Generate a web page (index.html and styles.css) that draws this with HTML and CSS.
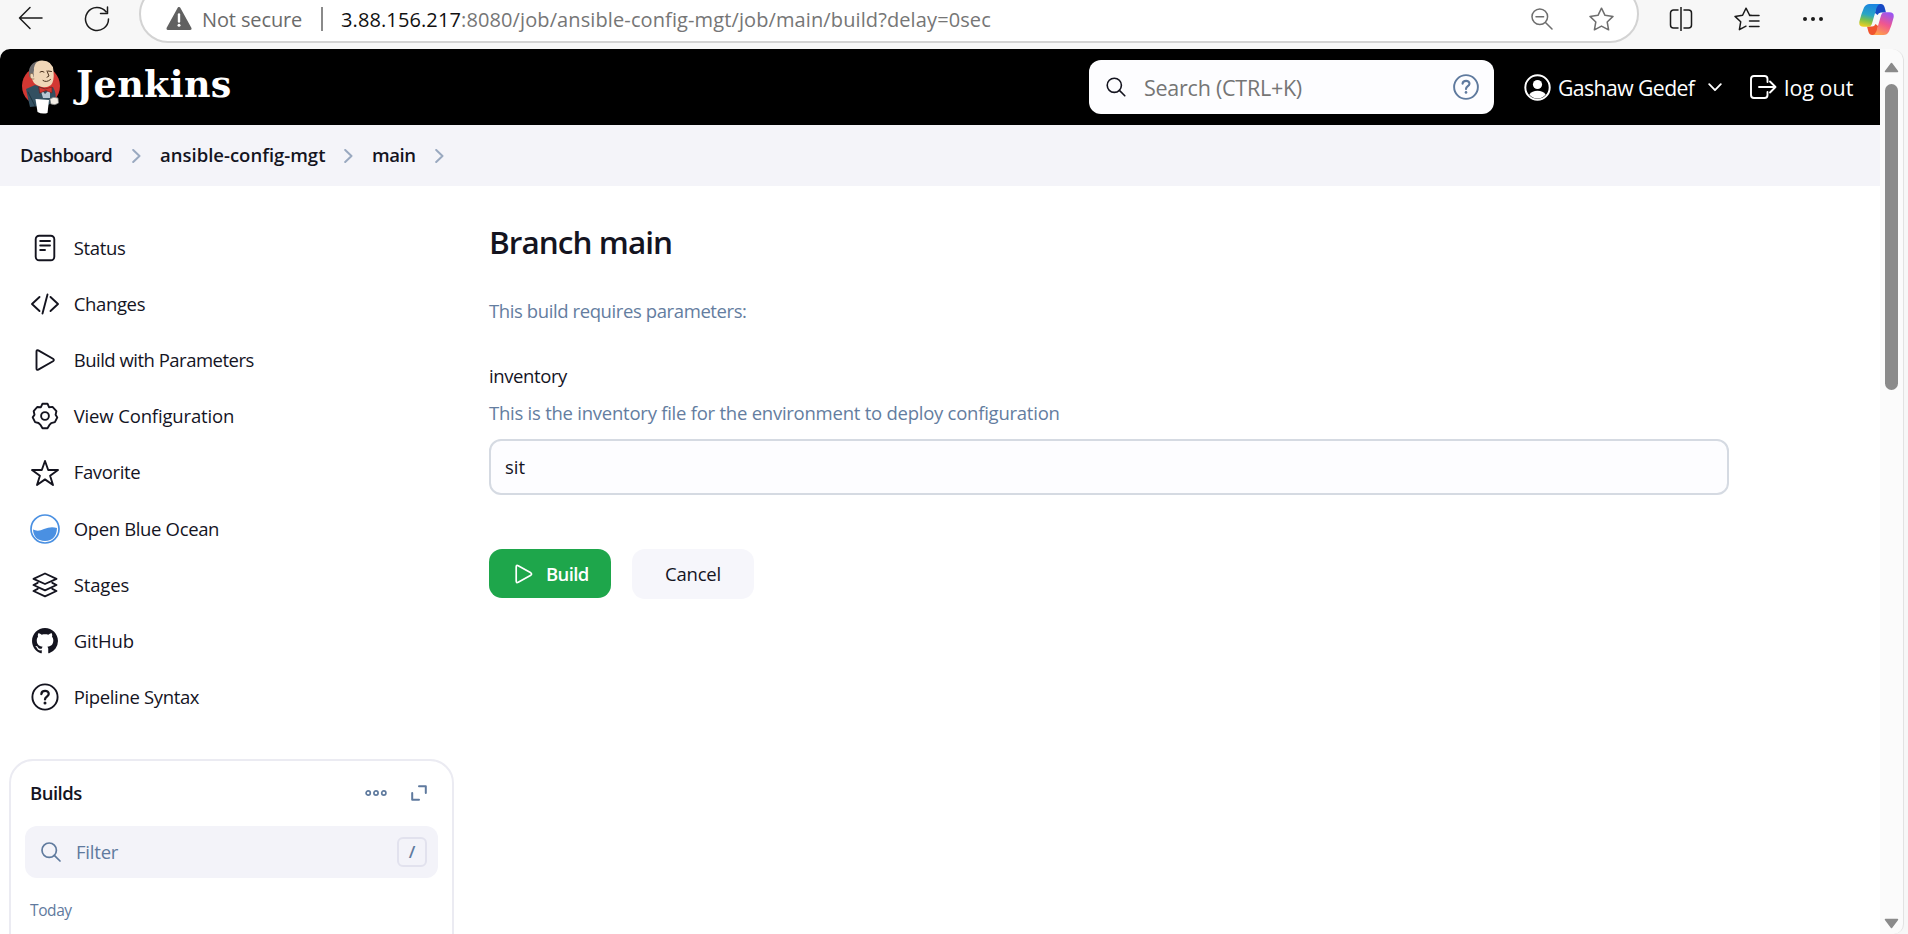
FILE: index.html
```
<!DOCTYPE html>
<html lang="en">
<head>
<meta charset="utf-8">
<title>Branch main - Jenkins</title>
<link rel="stylesheet" href="styles.css">
</head>
<body>
<div class="browser-bar">
  <svg class="back" width="26" height="24" viewBox="0 0 26 24"><path d="M24 12H1.5M12 1.5L1.5 12L12 22.5"/></svg>
  <svg class="reload" width="26" height="26" viewBox="0 0 26 26"><path d="M24.500 13A11.500 11.500 0 1 1 22 5.800M23.500 1V7.500H16.500"/></svg>
  <div class="address">
    <svg class="warn" width="26" height="24" viewBox="0 0 26 24"><path d="M13 1.500L24 21.500H2Z" fill="#616161" stroke="#616161" stroke-width="3" stroke-linejoin="round"/><path d="M13 7.500V14.500" stroke="#fff" stroke-width="2.400"/><circle cx="13" cy="18.300" r="1.500" fill="#fff" stroke="none"/></svg>
    <span class="t insecure">Not secure</span>
    <span class="divider"></span>
    <span class="t url"><span class="host">3.88.156.217</span>:8080/job/ansible-config-mgt/job/main/build?delay=0sec</span>
    <svg class="zoom-out" width="22" height="22" viewBox="0 0 22 22"><circle cx="8.800" cy="8.800" r="7.800"/><path d="M14.500 14.500L21 21M5 8.800H12.600"/></svg>
    <svg class="fav" width="25" height="24" viewBox="0 0 25 24"><path d="M12.500 1.200L16 8.300L24 9.400L18.200 15L19.600 22.800L12.500 19.100L5.400 22.800L6.800 15L1 9.400L9 8.300Z"/></svg>
  </div>
  <svg class="split" width="24" height="24" viewBox="0 0 24 24"><path d="M9 3H4.500A3 3 0 0 0 1.500 6V18A3 3 0 0 0 4.500 21H9M15 3H19.500A3 3 0 0 1 22.500 6V18A3 3 0 0 1 19.500 21H15M12 0V24"/></svg>
  <svg class="favs" width="26" height="24" viewBox="0 0 26 24"><path d="M18 8.500L15.500 8L12 1.200L8.600 8.300L1 9.400L6.700 14.800L5.400 22.700L12 19.200M15.500 8.500H25M15.500 14H25M15.500 19.500H25"/></svg>
  <svg class="dots" width="22" height="6" viewBox="0 0 22 6"><circle cx="3" cy="3" r="2"/><circle cx="11" cy="3" r="2"/><circle cx="19" cy="3" r="2"/></svg>
  <svg class="copilot" width="35" height="31" viewBox="0 0 35 31">
    <defs>
      <linearGradient id="cpA" x1="0.400" y1="0" x2="0.200" y2="1"><stop offset="0" stop-color="#1b86e0"/><stop offset=".45" stop-color="#2aa6c4"/><stop offset=".7" stop-color="#7cc14a"/><stop offset="1" stop-color="#f4d01f"/></linearGradient>
      <linearGradient id="cpB" x1="0.700" y1="0" x2="0.300" y2="1"><stop offset="0" stop-color="#9a55f2"/><stop offset=".5" stop-color="#f0568f"/><stop offset="1" stop-color="#ffa04a"/></linearGradient>
    </defs>
    <path d="M17 0H22Q24.500 0 25.500 3L27 8.500H22Q19.500 8.500 18.500 11L16 9Z" fill="#1749c4"/>
    <path d="M18 31H13Q10.500 31 9.500 28L8 22.500H13Q15.500 22.500 16.500 20L19 22Z" fill="#f0542e"/>
    <path d="M10.500 0H21Q18.500 1 17.500 4L13 19.500Q12 22.700 9 22.700H4.500Q-.5 22.700 .4 17.500Q2.500 9 5 3.500Q6.800 0 10.500 0Z" fill="url(#cpA)"/>
    <path d="M24.500 31H14Q16.500 30 17.500 27L22 11.500Q23 8.300 26 8.300H30.500Q35.500 8.300 34.600 13.500Q32.500 22 30 27.500Q28.200 31 24.500 31Z" fill="url(#cpB)"/>
  </svg>
</div>

<div class="window">
  <div class="page">
    <header class="top">
      <svg class="butler" width="40" height="56" viewBox="0 0 40 56">
        <ellipse cx="20" cy="27" rx="19" ry="19.500" fill="#d33833"/>
        <path d="M5 30L14 26L25 30L32 28Q36 35 34 42L27 46L9 48Q7 40 5 30Z" fill="#335061"/>
        <path d="M10 14Q11 2 21 1.500Q32 2 32.500 12Q33.500 22 30 26Q25 30 18 27Q11 24 11 19Z" fill="#f0d6b7"/>
        <path d="M8.500 18Q5.500 6 17 1.800Q12.500 6 13 11Q12 14 13 18L11 19Z" fill="#6d6b6d"/>
        <path d="M12 15Q9 13 9 17Q10 21 13 20" fill="#f0d6b7" stroke="#81603f" stroke-width=".7"/>
        <path d="M19 13Q21 11.500 23 13M27 12L30.500 12.500M26 12L28 17L26 18.200M22 21.500Q25.500 24 29.500 20.500" fill="none" stroke="#49301c" stroke-width="1"/>
        <path d="M19 29L24 35L29 30V39L22 39Z" fill="#b8c8d6"/>
        <path d="M18 28L24 30L31 28L31 34L25 31.500L19 34Z" fill="#d33833" stroke="#7a1512" stroke-width=".6"/>
        <path d="M14.500 40L28 41L26.500 54Q21 55.500 16.500 53Z" fill="#fff"/>
        <path d="M29 40Q32 37 37 39L37.500 44Q34 47 30 45Z" fill="#f3eee6" stroke="#777" stroke-width=".7"/>
        <path d="M7 33L12 43L14 47" fill="none" stroke="#1d3440" stroke-width="1"/>
      </svg>
      <span class="t wordmark">Jenkins</span>
      <div class="search">
        <svg class="magnifier" width="20" height="20" viewBox="0 0 20 20"><circle cx="8.300" cy="8.300" r="7.100"/><path d="M13.400 13.400L18.800 18.800"/></svg>
        <span class="t search-text">Search (CTRL+K)</span>
        <svg class="help" width="26" height="26" viewBox="0 0 512 512"><path d="M256 22a234 234 0 1 0 0 468 234 234 0 0 0 0-468z" stroke-width="38"/><path d="M188 190c8-75 138-72 136 2 0 50-68 48-68 105" stroke-width="42"/><circle class="solid" cx="256" cy="362" r="26"/></svg>
      </div>
      <div class="user">
        <svg width="27" height="27" viewBox="0 0 27 27"><circle cx="13.500" cy="13.500" r="12.200" fill="none" stroke="#fff" stroke-width="2"/><circle cx="13.500" cy="10.500" r="4.600" fill="#fff"/><path d="M5.300 20.500Q8 16.800 13.500 16.800T21.700 20.500Q18.500 24.500 13.500 24.500T5.300 20.500Z" fill="#fff"/></svg>
        <span class="t username">Gashaw Gedef</span>
        <svg class="chev" width="14" height="9" viewBox="0 0 14 9"><path d="M1.200 1.200L7 7.200L12.800 1.200"/></svg>
      </div>
      <div class="logout">
        <svg width="27" height="24" viewBox="0 0 27 24"><path d="M17.500 7V4Q17.500 1 14.500 1H4Q1 1 1 4V20Q1 23 4 23H14.500Q17.500 23 17.500 20V17M9 12H25.500M20 6.500L25.500 12L20 17.500"/></svg>
        <span class="t logout-text">log out</span>
      </div>
    </header>

    <nav class="crumbs">
      <span class="t c1">Dashboard</span>
      <svg width="9" height="14" viewBox="0 0 9 14"><path d="M1.200 1L7.500 7L1.200 13"/></svg>
      <span class="t c2">ansible-config-mgt</span>
      <svg width="9" height="14" viewBox="0 0 9 14"><path d="M1.200 1L7.500 7L1.200 13"/></svg>
      <span class="t c3">main</span>
      <svg width="9" height="14" viewBox="0 0 9 14"><path d="M1.200 1L7.500 7L1.200 13"/></svg>
    </nav>

    <div class="body">
      <aside class="side">
        <div class="tasks">
          <div class="task"><svg viewBox="0 0 30 30"><rect x="5.700" y="2.700" width="18.600" height="24.600" rx="3.500"/><path d="M10.200 8H20M10.200 12.500H20M10.200 17H15"/></svg><span class="t">Status</span></div>
          <div class="task"><svg viewBox="0 0 30 30"><path d="M9.500 8L2 15L9.500 22M20.500 8L28 15L20.500 22M17.500 5.500L12.500 24.500"/></svg><span class="t">Changes</span></div>
          <div class="task"><svg viewBox="0 0 30 30"><path d="M6.500 6.500V23.500Q6.500 25.500 8.300 24.600L23 16.200Q24.700 15 23 13.800L8.300 5.400Q6.500 4.500 6.500 6.500Z"/></svg><span class="t tight">Build with Parameters</span></div>
          <div class="task"><svg viewBox="0 0 30 30"><circle cx="15" cy="15" r="3.900"/><path d="M12.500 2.700H17.500L19 6.200L22.500 5.900L26.400 10.200L25.600 13.800L27.300 16.400L24.900 21.200L21.200 22.100L19.300 24.200L17.500 27.300H12.500L10.700 24.200L8.500 22L5.100 21.200L2.700 16.400L4.500 13.700L3.700 10.200L7.200 6L10.900 6.200Z"/></svg><span class="t loose">View Configuration</span></div>
          <div class="task"><svg viewBox="0 0 30 30"><path d="M15 3L18.200 12H28L20.100 17.800L23 27L15 21.400L7 27L9.900 17.800L2 12H11.800Z"/></svg><span class="t">Favorite</span></div>
          <div class="task ocean"><svg viewBox="0 0 30 30"><circle cx="15" cy="15" r="14" fill="#fff" stroke="#4a90e2" stroke-width="1.700"/><path d="M3 15.500Q8 18 14 15Q21 12 27 14Q26.500 26.500 15 27Q3.500 26.500 3 15.500Z" fill="#4a90e2" stroke="none"/></svg><span class="t">Open Blue Ocean</span></div>
          <div class="task"><svg viewBox="0 0 30 30"><path d="M15 3.500L26.500 8.800L15 14L3.500 8.800ZM7.700 12.800L3.500 15L15 20.300L26.500 15L22.300 12.800M7.700 18.800L3.500 21L15 26.300L26.500 21L22.300 18.800"/></svg><span class="t loose">Stages</span></div>
          <div class="task"><svg viewBox="-1.250 -1.250 18.500 18.500"><path fill="#14141f" stroke="none" d="M8 0C3.580 0 0 3.580 0 8c0 3.540 2.290 6.530 5.470 7.590.4.070.55-.17.55-.38 0-.19-.01-.82-.01-1.490-2.010.37-2.530-.49-2.690-.94-.09-.23-.48-.94-.82-1.130-.28-.15-.68-.52-.01-.53.63-.01 1.080.58 1.230.82.72 1.210 1.870.87 2.330.66.07-.52.28-.87.51-1.070-1.780-.2-3.640-.89-3.640-3.950 0-.87.31-1.590.82-2.150-.08-.2-.36-1.020.08-2.120 0 0 .67-.21 2.200.82.64-.18 1.320-.27 2-.27s1.360.09 2 .27c1.530-1.040 2.200-.82 2.200-.82.44 1.100.16 1.920.08 2.120.51.56.82 1.270.82 2.150 0 3.070-1.870 3.750-3.650 3.950.29.25.54.73.54 1.480 0 1.070-.01 1.930-.01 2.200 0 .21.15.46.55.38A8.010 8.010 0 0 0 16 8c0-4.420-3.580-8-8-8z"/></svg><span class="t loose">GitHub</span></div>
          <div class="task"><svg viewBox="0 0 30 30"><circle cx="15" cy="15" r="12.600"/><path d="M11.400 12C11.700 7.800 18.900 8 18.700 12C18.600 14.600 15 14.600 15 17.400" stroke-width="2.300"/><circle cx="15" cy="20.900" r="1.500" fill="#14141f" stroke="none"/></svg><span class="t">Pipeline Syntax</span></div>
        </div>
        <section class="builds">
          <div class="builds-head">
            <span class="t builds-title">Builds</span>
            <svg width="22" height="8" viewBox="0 0 22 8"><circle cx="3.200" cy="4" r="2.100"/><circle cx="11" cy="4" r="2.100"/><circle cx="18.800" cy="4" r="2.100"/></svg>
            <svg class="expand" width="16" height="16" viewBox="0 0 16 16"><path d="M8 1.200H14.800V8M8 14.800H1.200V8"/></svg>
          </div>
          <div class="filter">
            <svg width="20" height="20" viewBox="0 0 20 20"><circle cx="8.200" cy="8.200" r="7.200"/><path d="M13.300 13.300L19 19"/></svg>
            <span class="t filter-text">Filter</span>
            <span class="key">/</span>
          </div>
          <span class="t today">Today</span>
        </section>
      </aside>

      <main class="main">
        <h1><span class="t">Branch main</span></h1>
        <p class="muted intro"><span class="t">This build requires parameters:</span></p>
        <label class="label"><span class="t">inventory</span></label>
        <p class="muted desc"><span class="t">This is the inventory file for the environment to deploy configuration</span></p>
        <div class="input"><span class="t">sit</span></div>
        <div class="actions">
          <div class="btn build"><svg width="18" height="20" viewBox="0 0 18 20"><path d="M1.200 3V17Q1.200 19.300 3.200 18.200L15.800 11.200Q17.300 10 15.800 8.800L3.200 1.800Q1.200 .7 1.200 3Z"/></svg><span class="t">Build</span></div>
          <div class="btn cancel"><span class="t">Cancel</span></div>
        </div>
      </main>
    </div>
  </div>
  <div class="scrollbar">
    <svg width="15" height="11" viewBox="0 0 15 11"><path d="M7.500 1.500L13.500 9.500H1.500Z"/></svg>
    <div class="track"><div class="thumb"></div></div>
    <svg width="15" height="11" viewBox="0 0 15 11"><path d="M7.500 9.500L13.500 1.500H1.500Z"/></svg>
  </div>
</div>
</body>
</html>
```
FILE: styles.css
```
* { box-sizing: border-box; }
body {
  margin: 0;
  width: 1908px;
  height: 934px;
  overflow: hidden;
  background: #f7f7f7;
  color: #14141f;
  font-family: "Open Sans", "Noto Sans", sans-serif;
  font-size: 18.5px;
}
svg { display: block; flex: none; fill: none; stroke-linecap: round; stroke-linejoin: round; }
.t { white-space: nowrap; flex: none; line-height: 1; }

/* browser toolbar */
.browser-bar { height: 49px; display: flex; align-items: flex-start; background: #f7f7f7; padding-left: 18px; overflow: hidden; }
.browser-bar > svg { stroke: #1b1b1b; stroke-width: 1.5; }
.back { margin: 6px 40px 0 0; }
.reload { margin-top: 6px; }
.address { width: 1500px; height: 58px; margin: -15px 0 0 29px; padding: 10px 0 0 25px; border: 2px solid #d3d3d3; border-radius: 29px; background: #fff; display: flex; align-items: center; color: #767676; font-size: 20px; }
.insecure { margin: 2px 0 0 10px; width: 101px; color: #6b6b6b; letter-spacing: -.12px; }
.divider { width: 2px; height: 24px; margin: 0 18px 0 18px; background: #8a8a8a; }
.url { margin-top: 2px; width: 655px; letter-spacing: .11px; }
.host { color: #111; }
.address svg { stroke: #6e6e6e; stroke-width: 1.5; }
.zoom-out { margin-left: auto; }
.fav { margin: 0 23px 0 36px; }
.split { margin: 7px 0 0 30px; }
.favs { margin: 7px 0 0 41px; }
.browser-bar > .dots { margin: 16px 0 0 42px; fill: #1b1b1b; stroke: none; }
.browser-bar > .copilot { margin: 4px 0 0 35px; stroke: none; }

/* web content frame */
.window { width: 1904px; height: 885px; display: flex; border-right: 1px solid #e2e2e2; border-radius: 10px 12px 10px 0; overflow: hidden; background: #fbfbfb; }
.page { width: 1880px; flex: none; background: #fff; display: flex; flex-direction: column; }

.top { height: 76px; flex: none; background: #000; color: #fff; display: flex; align-items: center; padding-left: 21px; }
.wordmark { margin: 0 0 4px 15px; width: 158px; font: bold 36.5px/1 "DejaVu Serif", serif; letter-spacing: .35px; }
.search { width: 405px; height: 54px; margin: 0 0 1px 855px; border-radius: 12px; background: #fdfdff; display: flex; align-items: center; padding: 0 15px 0 17px; }
.magnifier { stroke: #14141f; stroke-width: 1.6; }
.search-text { margin: 3px auto 0 18px; color: #757575; font-size: 21.500px; letter-spacing: -.25px; }
.help { stroke: #5f7a9e; }
.solid { fill: #5f7a9e; stroke: none; }
.user { width: 226px; margin-left: 30px; display: flex; align-items: center; font-size: 21.200px; }
.username { margin: 2px 0 0 7px; width: 140px; letter-spacing: -.57px; }
.chev { margin-left: 10px; stroke: #fff; stroke-width: 1.800; }
.logout { display: flex; align-items: center; font-size: 21.500px; }
.logout svg { stroke: #fff; stroke-width: 1.900; }
.logout-text { margin: 2px 0 0 7px; }

.crumbs { height: 61px; flex: none; background: #f4f4f9; display: flex; align-items: center; padding-left: 20px; font-weight: 600; }
.crumbs svg { stroke: #9aa9c0; stroke-width: 2; }
.c1 { width: 112px; letter-spacing: -.65px; }
.c2 { margin-left: 19px; width: 184px; }
.c3 { margin-left: 19px; width: 63px; letter-spacing: -.45px; }

.body { flex: 1; min-height: 0; display: flex; background: #fff; }
.side { width: 489px; flex: none; padding: 34px 0 0 9px; overflow: hidden; }
.tasks { display: flex; flex-direction: column; padding-left: 21px; }
.task { height: 56.150px; display: flex; align-items: center; gap: 13.700px; letter-spacing: -.35px; }
.task svg { width: 30px; height: 30px; stroke: #14141f; stroke-width: 1.900; }
.tight { letter-spacing: -.5px; }
.loose { letter-spacing: -.15px; }

.builds { width: 445px; height: 220px; margin-top: 33.700px; border: 2px solid #ebebf2; border-radius: 24px; padding: 0 14px; display: flex; flex-direction: column; }
.builds-head { height: 65px; flex: none; display: flex; align-items: center; padding: 0 11px 0 5px; font-weight: 600; }
.builds-head svg { stroke: #5f7a9e; stroke-width: 1.700; margin-right: 24px; }
.builds-title { margin-right: auto; letter-spacing: -.5px; }
.builds-head .expand { stroke-width: 2; margin: 0; }
.filter { height: 52px; flex: none; width: 413px; border-radius: 12px; background: #f3f3f9; display: flex; align-items: center; padding: 0 11px 0 16px; color: #5f7a9e; }
.filter svg { stroke: #5f7a9e; stroke-width: 1.700; }
.filter-text { margin: 0 auto 0 15px; letter-spacing: -.2px; }
.key { width: 30px; height: 30px; border: 2px solid #e2e2ee; border-radius: 6px; display: grid; place-items: center; font-size: 17px; font-weight: 600; line-height: 1; }
.today { margin: 25px 0 0 5px; font-size: 15.500px; letter-spacing: -.4px; color: #5f7a9e; }

.main { width: 1240px; padding-top: 32px; display: flex; flex-direction: column; }
h1 { margin: 0; height: 47px; display: flex; align-items: center; font-size: 31.500px; font-weight: 600; letter-spacing: -.95px; }
.muted { margin: 0; color: #647da0; display: flex; align-items: center; height: 30px; }
.intro { margin-top: 31px; letter-spacing: -.4px; }
.label { height: 30px; margin-top: 35px; display: flex; align-items: center; letter-spacing: -.4px; }
.desc { margin-top: 7px; letter-spacing: -.245px; }
.input { height: 56px; margin-top: 11px; border: 2px solid #d5dae2; border-radius: 12px; background: #fdfdff; display: flex; align-items: center; padding-left: 14px; }
.actions { margin-top: 54px; display: flex; gap: 21px; }
.btn { width: 122px; height: 49px; border-radius: 13px; display: flex; align-items: center; }
.build { background: #1ea64b; color: #fff; padding-left: 26px; font-weight: 600; letter-spacing: -.65px; }
.build svg { stroke: #fff; stroke-width: 1.700; margin-right: 13px; }
.build .t { margin-top: 2px; }
.cancel { height: 50px; background: #f6f6fb; padding-left: 33px; letter-spacing: -.2px; }

.scrollbar { flex: 1; display: flex; flex-direction: column; align-items: center; padding: 12.500px 0 5px; }
.scrollbar svg { fill: #8b8b8b; stroke: #8b8b8b; stroke-width: 1.500; }
.track { flex: 1; padding-top: 11.500px; }
.thumb { width: 13px; height: 306px; border-radius: 7px; background: #8b8b8b; }
```
